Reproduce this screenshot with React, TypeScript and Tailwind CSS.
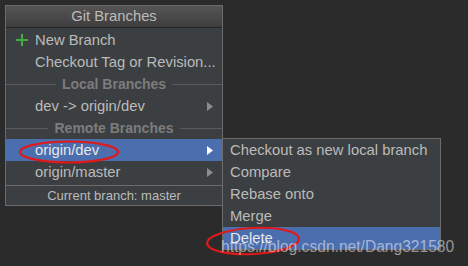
import React from 'react'

const FONT = { fontFamily: '"Liberation Sans", Arial, sans-serif' }

function Arrow({ active }: { active?: boolean }) {
  return (
    <svg width="6" height="9" viewBox="0 0 6 9" className="shrink-0">
      <path d="M0 0 L6 4.5 L0 9 Z" fill={active ? '#ffffff' : '#8c8c8c'} />
    </svg>
  )
}

function Item({ label, icon, arrow, active }: { label: string; icon?: React.ReactNode; arrow?: boolean; active?: boolean }) {
  return (
    <div className={`flex h-[22px] items-center pl-[10px] pr-[9px] ${active ? 'bg-[#4b6eaf] text-[#e8e8e8]' : 'text-[#bbbbbb]'}`}>
      <span className="flex w-[19px] shrink-0 items-center">{icon}</span>
      <span className="min-w-0 flex-1 whitespace-nowrap">{label}</span>
      {arrow && <Arrow active={active} />}
    </div>
  )
}

function Header({ label }: { label: string }) {
  return (
    <div className="flex h-[22px] items-center">
      <div className="h-px flex-1 bg-[#5a5a5a]" />
      <span className="px-[6px] text-[14px] font-bold text-[#7c7c7c]">{label}</span>
      <div className="h-px flex-1 bg-[#5a5a5a]" />
    </div>
  )
}

const SUB = ['Checkout as new local branch', 'Compare', 'Rebase onto', 'Merge', 'Delete']

export default function App() {
  return (
    <div className="relative h-[266px] w-[468px] overflow-hidden bg-[#2b2b2b] pl-[5px] pt-[5px] text-[14.8px]" style={FONT}>
      <div className="w-[218px] border border-[#6b6b6b] bg-[#3c3f41]">
        <div className="flex h-[22px] items-center justify-center border-b border-[#262626] bg-gradient-to-b from-[#555555] to-[#3e3e3e] text-[#bbbbbb]">
          Git Branches
        </div>
        <div className="pb-[2px] pt-[1px]">
          <Item
            label="New Branch"
            icon={
              <svg width="12" height="12" viewBox="0 0 12 12">
                <path d="M6 0 V12 M0 6 H12" stroke="#3fae3f" strokeWidth="2" />
              </svg>
            }
          />
          <Item label="Checkout Tag or Revision..." />
          <Header label="Local Branches" />
          <Item label="dev -> origin/dev" arrow />
          <Header label="Remote Branches" />
          <Item label="origin/dev" arrow active />
          <Item label="origin/master" arrow />
        </div>
        <div className="flex h-[20px] items-center justify-center border-t border-[#6b6b6b] text-[13px] text-[#bbbbbb]">
          Current branch: master
        </div>
      </div>

      <div className="absolute left-[222px] top-[138px] w-[219px] border border-[#6b6b6b] bg-[#3c3f41]">
        {SUB.map((s, i) => (
          <div
            key={s}
            className={`flex h-[22px] items-center whitespace-nowrap pl-[7px] ${i === 4 ? 'bg-[#4b6eaf] text-[#e8e8e8]' : 'text-[#bbbbbb]'}`}
          >
            {s}
          </div>
        ))}
      </div>

      <svg className="pointer-events-none absolute left-0 top-0" width="468" height="266">
        <ellipse cx="69" cy="152" rx="49" ry="10.5" fill="none" stroke="#e0191b" strokeWidth="2.2" />
        <ellipse cx="253" cy="241" rx="46" ry="13" fill="none" stroke="#e0191b" strokeWidth="2.2" transform="rotate(-3 253 241)" />
      </svg>

      <div className="pointer-events-none absolute left-[221px] top-[237px] whitespace-nowrap text-[15.6px] leading-[20px] text-white/50" style={{ fontFamily: 'Arial, "Liberation Sans", sans-serif' }}>
        https://blog.csdn.net/Dang321580
      </div>
    </div>
  )
}
